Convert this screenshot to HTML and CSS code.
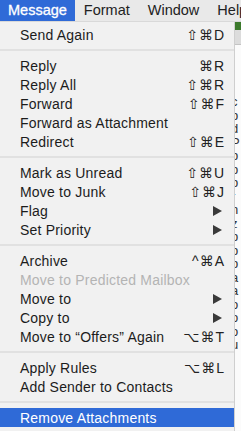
FILE: index.html
```html
<!DOCTYPE html>
<html>
	<head>
		<meta charset="utf-8" />
		<link rel="stylesheet" href="styles.css">
	</head>
	<body>
		<div class="menubar">
			<span class="menu-title active">Message</span>
			<span class="menu-title">Format</span>
			<span class="menu-title">Window</span>
			<span class="menu-title">Help</span>
		</div>
		<div class="screen">
			<div class="menu">
				<div class="item"><span>Send Again</span><span class="key">⇧⌘D</span></div>
				<div class="sep"></div>
				<div class="item"><span>Reply</span><span class="key">⌘R</span></div>
				<div class="item"><span>Reply All</span><span class="key">⇧⌘R</span></div>
				<div class="item"><span>Forward</span><span class="key">⇧⌘F</span></div>
				<div class="item"><span>Forward as Attachment</span></div>
				<div class="item"><span>Redirect</span><span class="key">⇧⌘E</span></div>
				<div class="sep"></div>
				<div class="item"><span>Mark as Unread</span><span class="key">⇧⌘U</span></div>
				<div class="item"><span>Move to Junk</span><span class="key">⇧⌘J</span></div>
				<div class="item"><span>Flag</span><span class="arrow"></span></div>
				<div class="item"><span>Set Priority</span><span class="arrow"></span></div>
				<div class="sep"></div>
				<div class="item"><span>Archive</span><span class="key">^⌘A</span></div>
				<div class="item disabled"><span>Move to Predicted Mailbox</span></div>
				<div class="item"><span>Move to</span><span class="arrow"></span></div>
				<div class="item"><span>Copy to</span><span class="arrow"></span></div>
				<div class="item"><span>Move to “Offers” Again</span><span class="key">⌥⌘T</span></div>
				<div class="sep"></div>
				<div class="item"><span>Apply Rules</span><span class="key">⌥⌘L</span></div>
				<div class="item"><span>Add Sender to Contacts</span></div>
				<div class="sep"></div>
				<div class="item selected"><span>Remove Attachments</span></div>
			</div>
			<div class="behind">
				<div class="toolbar"></div>
				<div class="header"></div>
				<div class="lines">
					<span>c</span><span>p</span><span>d</span><span>P</span><span>p</span><span>p</span><span>p</span>
					<span>r</span><span>n</span><span>z</span><span>p</span><span>p</span><span>p</span><span>a</span>
					<span>a</span><span>o</span><span>o</span><span>o</span><span>u</span>
				</div>
			</div>
		</div>
	</body>
</html>
```

FILE: styles.css
```css
body {
	margin: 0;
	width: 241px;
	height: 431px;
	overflow: hidden;
	background-color: #f0f0f0;
	font-family: "Liberation Sans", Arial, "DejaVu Sans", sans-serif;
	color: #1c1c1c;
}

.menubar {
	display: flex;
	height: 22px;
	background-color: #e9e9e9;
	border-bottom: 1px solid #d9d9d9;
	box-sizing: border-box;
	font-size: 14.5px;
	line-height: 21px;
	white-space: nowrap;
}

.menu-title {
	padding: 0 9px;
	color: #222;
}

.menu-title.active {
	padding: 0 8px;
	background-color: #2f6ad7;
	color: #fff;
	-webkit-text-stroke: 0.3px #fff;
}

.screen {
	display: flex;
	height: 409px;
}

.menu {
	width: 235px;
	flex: none;
	padding: 3px 0 4px;
	box-sizing: border-box;
	background-color: #f1f1f1;
	border-right: 1px solid #cfcfcf;
	font-size: 14px;
	letter-spacing: 0.2px;
}

.item {
	display: flex;
	justify-content: space-between;
	align-items: center;
	height: 19px;
	padding: 0 9px 0 20px;
	white-space: nowrap;
}

.item.disabled {
	color: #b4b4b4;
}

.item.selected {
	background-color: #2f6ad7;
	color: #fff;
}

.key {
	font-family: "Liberation Sans", "DejaVu Sans", sans-serif;
	font-size: 14px;
	letter-spacing: 1px;
	color: #222;
}

.arrow {
	width: 0;
	height: 0;
	margin-right: 3px;
	border-left: 9px solid #3a3a3a;
	border-top: 5px solid transparent;
	border-bottom: 5px solid transparent;
}

.sep {
	height: 2px;
	margin: 5px 0;
	background-color: #e1e1e1;
}

.behind {
	flex: 1;
	overflow: hidden;
	background-color: #fbfbfb;
}

.toolbar {
	height: 8px;
	background-color: #3c7a2c;
}

.header {
	height: 14px;
	background-color: #dcdcdc;
	border-bottom: 1px solid #c4c4c4;
}

.lines {
	display: flex;
	flex-direction: column;
	font-size: 13px;
	line-height: 13.5px;
	color: #333;
	margin-left: -4px;
	padding-top: 50px;
}
```
